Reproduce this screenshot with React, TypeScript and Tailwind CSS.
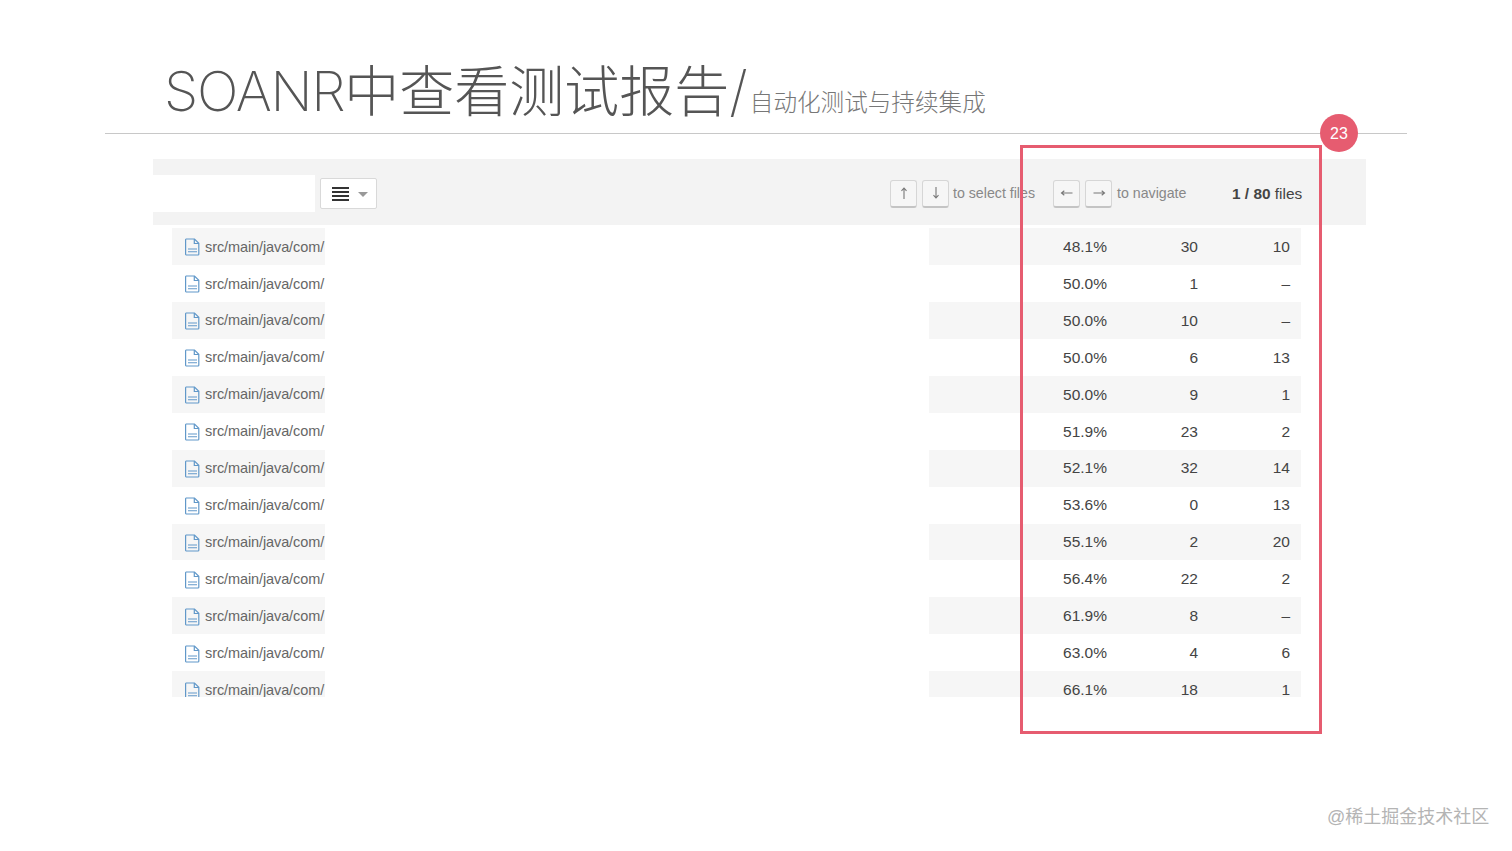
// App.tsx
const ROWS = [
  ["48.1%", "30", "10"],
  ["50.0%", "1", "–"],
  ["50.0%", "10", "–"],
  ["50.0%", "6", "13"],
  ["50.0%", "9", "1"],
  ["51.9%", "23", "2"],
  ["52.1%", "32", "14"],
  ["53.6%", "0", "13"],
  ["55.1%", "2", "20"],
  ["56.4%", "22", "2"],
  ["61.9%", "8", "–"],
  ["63.0%", "4", "6"],
  ["66.1%", "18", "1"],
];

const CJK = "font-['Inter','Noto_Sans_CJK_SC',sans-serif]";

function FileIcon() {
  return (
    <svg width="15" height="18" viewBox="0 0 15 18" fill="none" stroke="#6198c9" strokeWidth="1.2" className="shrink-0">
      <path d="M1.2 1h8.300l4.300 4.300v10.900a.8.8 0 0 1-.8.8H1.200a.8.8 0 0 1-.6-.8V1.800a.8.8 0 0 1 .6-.8z" />
      <path d="M9.300 1v4.500h4.500" />
      <path d="M3 11h9M3 13.800h9" strokeWidth="1.100" />
    </svg>
  );
}

// keyboard hint, arrow drawn so the thin long strokes match
function Key({ dir }: { dir: "up" | "down" | "left" | "right" }) {
  const d = {
    up: "M7 13V2M4.500 4.800L7 2l2.500 2.800",
    down: "M7 1v11M4.500 9.200L7 12l2.500-2.800",
    left: "M12.500 7H1.500M4.300 4.800L1.500 7l2.800 2.200",
    right: "M1.500 7h11M9.700 4.800L12.500 7l-2.800 2.200",
  }[dir];
  return (
    <span className="flex h-[28px] w-[27px] items-center justify-center rounded-[3px] border border-[#d6d6d6] border-b-2 border-b-[#c4c4c4] bg-[#f6f6f6]">
      <svg width="14" height="14" viewBox="0 0 14 14" fill="none" stroke="#777" strokeWidth="1.100">
        <path d={d} />
      </svg>
    </span>
  );
}

function MenuIcon() {
  return (
    <svg width="17" height="14" viewBox="0 0 17 14" fill="#333">
      <rect y="0" width="17" height="2" />
      <rect y="4" width="17" height="2" />
      <rect y="8" width="17" height="2" />
      <rect y="12" width="17" height="2" />
    </svg>
  );
}

export default function App() {
  return (
    <div className="relative h-[851px] w-[1512px] overflow-hidden bg-white font-['Liberation_Sans',sans-serif]">
      {/* slide title */}
      <div className={`flex h-[133px] items-end pl-[164px] pb-[9px] text-[#555] ${CJK}`}>
        <span className="text-[55px] font-extralight leading-[66px] tracking-[-1.3px]">SOANR</span>
        <span className="text-[55px] font-extralight leading-[66px]">中查看测试报告/</span>
        <span className="mb-[6px] ml-[2px] text-[23.6px] font-extralight leading-[30px] text-[#777]">自动化测试与持续集成</span>
      </div>
      <div className="mx-[105px] h-px bg-[#c8c8c8]" />

      {/* toolbar */}
      <div className="mx-[153px] mt-[25px] mb-[3px] flex h-[66px] w-[1213px] items-center bg-[#f3f3f3] pt-[3px] text-[14.2px] text-[#888]">
        <div className="h-[37px] w-[162px] bg-white" />
        <button className="ml-[5px] flex h-[31px] w-[57px] items-center gap-[9px] rounded-[2px] border border-[#d9d9d9] bg-white pl-[11px]">
          <MenuIcon />
          <span className="mt-[2px] h-0 w-0 border-x-[5px] border-t-[5px] border-x-transparent border-t-[#999]" />
        </button>
        <div className="ml-[513px] flex items-center gap-[5px]">
          <Key dir="up" />
          <Key dir="down" />
        </div>
        <span className="ml-[4px] mt-[1px] w-[100px]">to select files</span>
        <div className="flex items-center gap-[5px]">
          <Key dir="left" />
          <Key dir="right" />
        </div>
        <span className="ml-[5px] mt-[1px] w-[115px]">to navigate</span>
        <span className="mt-[1px] text-[15.4px] text-[#444]">
          <b>1 / 80</b> files
        </span>
      </div>

      {/* file table */}
      <div className="ml-[172px] h-[469px] w-[1129px] overflow-hidden text-[15.5px]">
        {ROWS.map((r, i) => (
          <div key={i} className={`flex h-[36.95px] items-center ${i % 2 === 0 ? "bg-[#f6f6f6]" : "bg-white"}`}>
            <div className="flex w-[153px] items-center gap-[6px] pl-[13px] pt-[2px] text-[#666]">
              <FileIcon />
              <span className="-ml-[1px] whitespace-nowrap text-[14.5px] tracking-[-0.1px]">src/main/java/com/</span>
            </div>
            <div className="h-full w-[604px] bg-white" />
            <span className="w-[178px] text-right text-[#444]">{r[0]}</span>
            <span className="w-[91px] text-right text-[#444]">{r[1]}</span>
            <span className="w-[92px] text-right text-[#444]">{r[2]}</span>
          </div>
        ))}
      </div>

      {/* annotation over the table */}
      <div className="absolute left-[1020px] top-[145px] h-[589px] w-[302px] border-[3px] border-[#e65c70]" />
      <div className="absolute left-[1320px] top-[114px] flex h-[38px] w-[38px] items-center justify-center rounded-full bg-[#e65c70] pt-[1px] text-[16px] text-white">
        23
      </div>
      <div className="absolute left-[1327px] top-[805px] font-['Liberation_Sans','Noto_Sans_CJK_SC',sans-serif] text-[18px] leading-[24px] text-[#b4b4b4]">
        @稀土掘金技术社区
      </div>
    </div>
  );
}
